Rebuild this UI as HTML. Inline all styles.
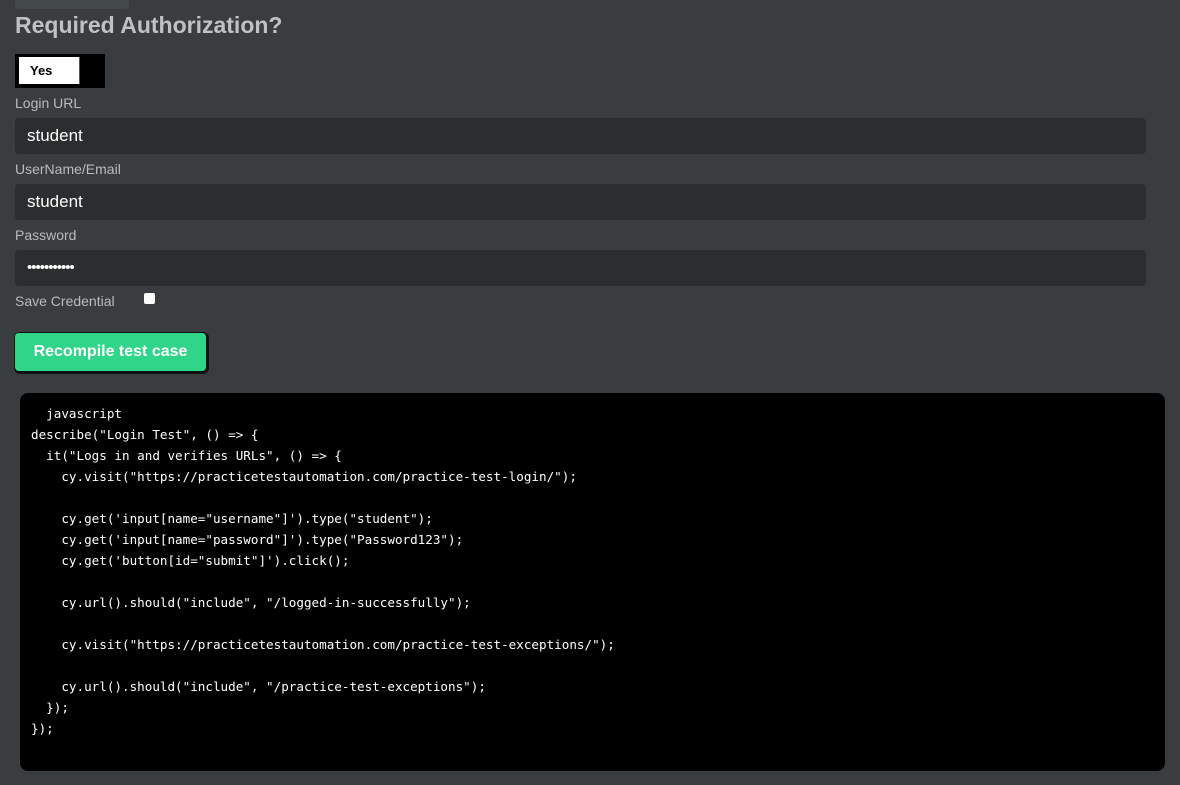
<!DOCTYPE html>
<html><head><style>
body{margin:0;width:1180px;height:785px;background:#393d3f;font-family:"Liberation Sans",sans-serif;overflow:hidden;position:relative}
.a{position:absolute}
.lbl{color:#b9bcbd;font-size:14px;left:15px}
.inp{left:15px;width:1131px;height:36px;background:#2a2e2f;border-radius:4px;color:#fff;font-size:17px;line-height:36px;padding-left:12px;box-sizing:border-box}
pre{margin:0;font-family:"DejaVu Sans Mono",monospace;font-size:12.6px;line-height:21px;color:#fff}
</style></head><body>
<div class="a" style="left:15px;top:-6px;width:114px;height:15px;background:#43484a;border-radius:4px"></div>
<div class="a" style="left:15px;top:12px;font-size:23px;font-weight:bold;color:#bfc1c3">Required Authorization?</div>
<div class="a" style="left:15px;top:54px;width:90px;height:34px;background:#000"></div>
<div class="a" style="left:19px;top:57px;width:61px;height:27px;background:#fff;border-right:1px solid #555;font-size:13px;font-weight:bold;line-height:27px;padding-left:11px;box-sizing:border-box">Yes</div>
<div class="a lbl" style="top:95px">Login URL</div>
<div class="a inp" style="top:118px">student</div>
<div class="a lbl" style="top:161px">UserName/Email</div>
<div class="a inp" style="top:184px">student</div>
<div class="a lbl" style="top:227px">Password</div>
<div class="a inp" style="top:250px;font-size:15px;letter-spacing:-1px">•••••••••••</div>
<div class="a lbl" style="top:293px">Save Credential</div>
<div class="a" style="left:144px;top:293px;width:11px;height:11px;background:#fff;border-radius:2px"></div>
<div class="a" style="left:15px;top:333px;width:191px;height:38px;background:#2fd689;border-radius:4px;box-shadow:1px 1px 0 2px #111;color:#fff;font-weight:bold;font-size:16px;line-height:38px;text-align:center">Recompile test case</div>
<div class="a" style="left:20px;top:393px;width:1145px;height:378px;background:#000;border-radius:8px;box-sizing:border-box;padding:10px 0 0 11px">
<pre>  javascript
describe("Login Test", () => {
  it("Logs in and verifies URLs", () => {
    cy.visit("https://practicetestautomation.com/practice-test-login/");

    cy.get('input[name="username"]').type("student");
    cy.get('input[name="password"]').type("Password123");
    cy.get('button[id="submit"]').click();

    cy.url().should("include", "/logged-in-successfully");

    cy.visit("https://practicetestautomation.com/practice-test-exceptions/");

    cy.url().should("include", "/practice-test-exceptions");
  });
});</pre>
</div>
</body></html>
